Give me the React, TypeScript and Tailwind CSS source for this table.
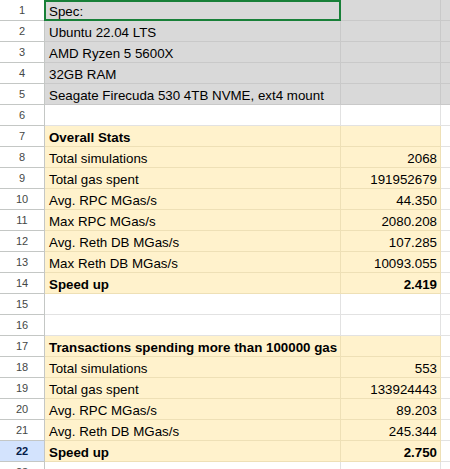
const GRAY = 'gray';
const YELLOW = 'yellow';
const WHITE = 'white';

type Row = { a?: string; b?: string; bold?: boolean; fill: string };

const rows: Row[] = [
    { a: 'Spec:', fill: GRAY },
    { a: 'Ubuntu 22.04 LTS', fill: GRAY },
    { a: 'AMD Ryzen 5 5600X', fill: GRAY },
    { a: '32GB RAM', fill: GRAY },
    { a: 'Seagate Firecuda 530 4TB NVME, ext4 mount', fill: GRAY },
    { fill: WHITE },
    { a: 'Overall Stats', bold: true, fill: YELLOW },
    { a: 'Total simulations', b: '2068', fill: YELLOW },
    { a: 'Total gas spent', b: '191952679', fill: YELLOW },
    { a: 'Avg. RPC MGas/s', b: '44.350', fill: YELLOW },
    { a: 'Max RPC MGas/s', b: '2080.208', fill: YELLOW },
    { a: 'Avg. Reth DB MGas/s', b: '107.285', fill: YELLOW },
    { a: 'Max Reth DB MGas/s', b: '10093.055', fill: YELLOW },
    { a: 'Speed up', b: '2.419', bold: true, fill: YELLOW },
    { fill: WHITE },
    { fill: WHITE },
    { a: 'Transactions spending more than 100000 gas', bold: true, fill: YELLOW },
    { a: 'Total simulations', b: '553', fill: YELLOW },
    { a: 'Total gas spent', b: '133924443', fill: YELLOW },
    { a: 'Avg. RPC MGas/s', b: '89.203', fill: YELLOW },
    { a: 'Avg. Reth DB MGas/s', b: '245.344', fill: YELLOW },
    { a: 'Speed up', b: '2.750', bold: true, fill: YELLOW },
    { fill: WHITE },
];

const cellClass = (fill: string) =>
    fill === GRAY
        ? 'bg-[#d9d9d9] border-[#c9c9c9]'
        : fill === YELLOW
        ? 'bg-[#fff2cc] border-[#eee0b6]'
        : 'bg-white border-[#e2e2e2]';

export default function App() {
    return (
        <div className="relative w-[450px] h-[469px] overflow-hidden bg-white font-['Liberation_Sans',Arial,sans-serif] text-[13.33px] text-black">
            {rows.map((row, i) => {
                const selected = i === 21;
                const fillC = row.fill === GRAY ? GRAY : WHITE;
                return (
                    <div key={i} className="flex h-[21px]">
                        <div
                            className={
                                selected
                                    ? 'w-[45px] shrink-0 flex items-center justify-center border-r border-b border-[#c4c7c5] bg-[#d3e3fd] text-[11px] font-bold text-[#041e49]'
                                    : 'w-[45px] shrink-0 flex items-center justify-center border-r border-b border-[#c4c7c5] bg-white text-[11px] text-[#444746]'
                            }
                        >
                            {i + 1}
                        </div>
                        <div className={`w-[296px] shrink-0 flex items-end pb-[1px] pl-[4px] border-r border-b whitespace-nowrap ${cellClass(row.fill)}`}>
                            <span className={`leading-[15px] ${row.bold ? 'font-bold' : ''}`}>{row.a}</span>
                        </div>
                        <div className={`w-[100px] shrink-0 flex items-end justify-end pb-[1px] pr-[3px] border-r border-b ${cellClass(row.fill)}`}>
                            <span className={`leading-[15px] ${row.bold ? 'font-bold' : ''}`}>{row.b}</span>
                        </div>
                        <div className={`w-[100px] shrink-0 border-r border-b ${cellClass(fillC)}`} />
                    </div>
                );
            })}
            <div className="absolute left-[44px] top-0 w-[297px] h-[21px] border-2 border-[#188038]" />
        </div>
    );
}
